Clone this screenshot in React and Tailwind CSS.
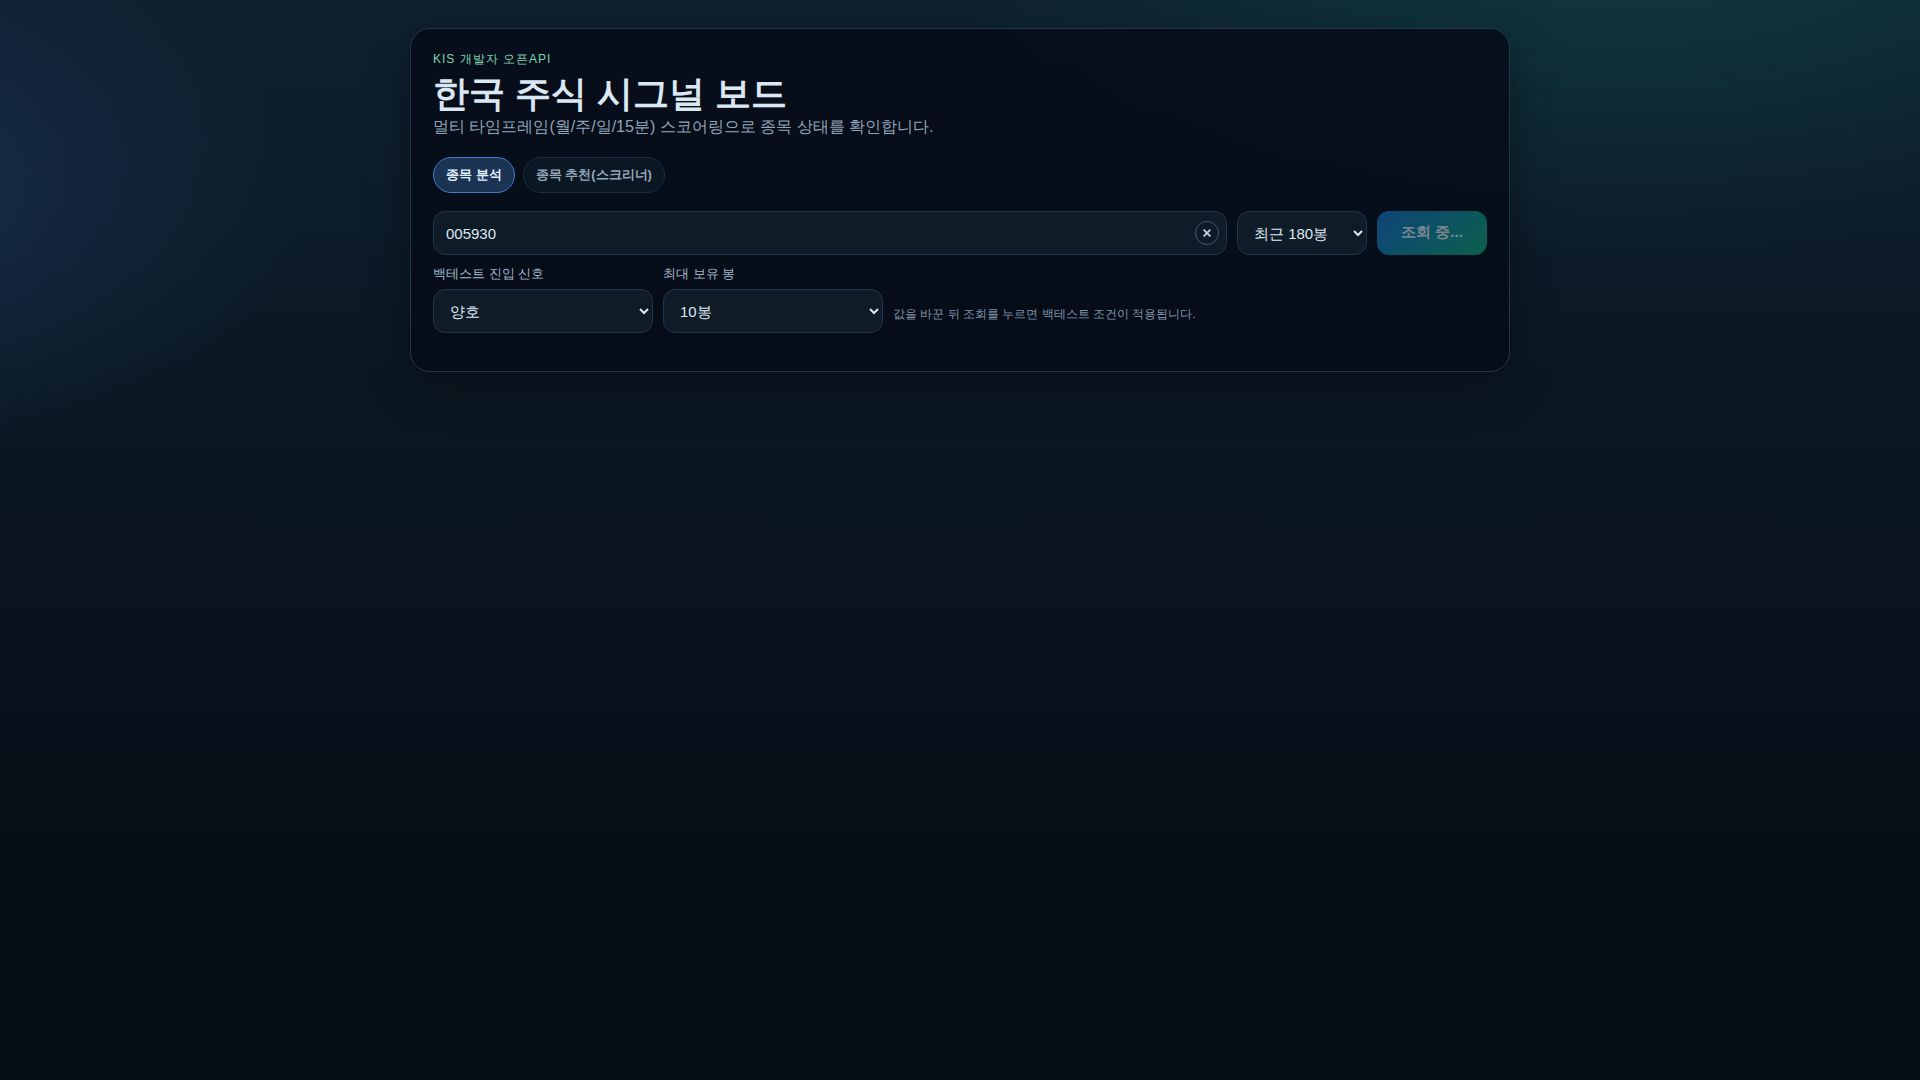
import { useState } from 'react';

const tabs = [
  { id: 'analysis', label: '종목 분석' },
  { id: 'screener', label: '종목 추천(스크리너)' },
];

const fieldClass =
  'h-11 rounded-xl border border-[#20354a] bg-[#0f1c28] text-[15px] text-[#dbe7f3] outline-none';

function App() {
  const [tab, setTab] = useState('analysis');
  const [symbol, setSymbol] = useState('005930');
  const [bars, setBars] = useState('180');
  const [signal, setSignal] = useState('good');
  const [holdBars, setHoldBars] = useState('10');
  const loading = true;

  return (
    <div className="min-h-screen bg-[radial-gradient(1200px_600px_at_85%_-10%,#0f3d3e_0%,transparent_60%),radial-gradient(900px_500px_at_-10%_18%,#183050_0%,transparent_55%),linear-gradient(180deg,#0f2030_0%,#0a1620_45%,#070e18_80%)] px-4 py-7 font-['Liberation_Sans',sans-serif] text-[#dbe7f3]">
      <main className="mx-auto max-w-[1100px] rounded-[20px] border border-[#20354a] bg-[#060c17]/85 px-[22px] pt-[22px] pb-[38px] shadow-[0_16px_40px_rgba(0,0,0,0.35)]">
        <header>
          <p className="text-xs leading-4 tracking-[1px] text-[#7dd3ae]">KIS 개발자 오픈API</p>
          <h1 className="mt-1.5 text-4xl leading-[42px] font-bold">한국 주식 시그널 보드</h1>
          <p className="text-base leading-6 text-[#8fa3b8]">
            멀티 타임프레임(월/주/일/15분) 스코어링으로 종목 상태를 확인합니다.
          </p>
        </header>

        <nav className="mt-[18px] flex gap-2">
          {tabs.map((t) => (
            <button
              key={t.id}
              type="button"
              onClick={() => setTab(t.id)}
              className={`h-9 rounded-full border px-3 text-[13px] font-bold ${
                tab === t.id
                  ? 'border-[#3f7bcf] bg-[#1c3454] text-[#e0f0ff]'
                  : 'border-[#1c2d3f] bg-[#0b1722] text-[#94a6ba]'
              }`}
            >
              {t.label}
            </button>
          ))}
        </nav>

        <form onSubmit={(e) => e.preventDefault()}>
          <div className="mt-[18px] flex gap-2.5">
            <div className="relative flex-1">
              <input
                type="text"
                aria-label="종목 코드"
                value={symbol}
                onChange={(e) => setSymbol(e.target.value)}
                className={`${fieldClass} w-full pr-10 pl-3`}
              />
              <button
                type="button"
                aria-label="지우기"
                onClick={() => setSymbol('')}
                className="absolute top-2.5 right-2 flex size-6 items-center justify-center rounded-full border border-[#475a6e] bg-[#0f1a26] text-[#c3d2e2]"
              >
                <svg viewBox="0 0 8 8" className="size-2" stroke="currentColor" strokeWidth="1.8">
                  <path d="M0.6 0.6 7.4 7.4M7.4 0.6 0.6 7.4" />
                </svg>
              </button>
            </div>
            <select
              aria-label="조회 기간"
              value={bars}
              onChange={(e) => setBars(e.target.value)}
              className={`${fieldClass} w-[130px] px-3`}
            >
              <option value="120">최근 120봉</option>
              <option value="180">최근 180봉</option>
              <option value="240">최근 240봉</option>
            </select>
            <button
              type="submit"
              disabled={loading}
              className="h-11 w-[110px] rounded-xl bg-[linear-gradient(135deg,#1670c4,#10a576)] pb-0.5 text-[15px] font-bold text-[#dbe7f3] disabled:opacity-55"
            >
              {loading ? '조회 중...' : '조회'}
            </button>
          </div>

          <div className="mt-2.5 flex items-end gap-2.5">
            <label className="flex w-[220px] flex-col gap-1.5 text-[13px] leading-[18px] text-[#a5b8cc]">
              백테스트 진입 신호
              <select
                value={signal}
                onChange={(e) => setSignal(e.target.value)}
                className={`${fieldClass} px-3`}
              >
                <option value="good">양호</option>
                <option value="strong">강력</option>
              </select>
            </label>
            <label className="flex w-[220px] flex-col gap-1.5 text-[13px] leading-[18px] text-[#a5b8cc]">
              최대 보유 봉
              <select
                value={holdBars}
                onChange={(e) => setHoldBars(e.target.value)}
                className={`${fieldClass} px-3`}
              >
                <option value="5">5봉</option>
                <option value="10">10봉</option>
                <option value="20">20봉</option>
              </select>
            </label>
            <p className="pb-2.5 text-xs leading-[18px] text-[#8094aa]">
              값을 바꾼 뒤 조회를 누르면 백테스트 조건이 적용됩니다.
            </p>
          </div>
        </form>
      </main>
    </div>
  );
}

export default App;
